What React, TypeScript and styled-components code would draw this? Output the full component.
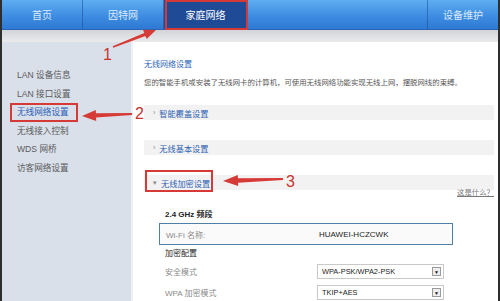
import React from "react";
import styled, { createGlobalStyle, css } from "styled-components";

const GlobalStyle = createGlobalStyle`
  html, body {
    margin: 0;
    padding: 0;
    background: #ffffff;
  }
  body {
    font-family: "Liberation Sans", "Noto Sans CJK SC", sans-serif;
  }
`;

const Page = styled.div`
  position: relative;
  box-sizing: border-box;
  width: 500px;
  height: 301px;
  overflow: hidden;
  display: flex;
  flex-direction: column;
  border-left: 2px solid #2e2e2e;
  border-right: 2px solid #2e2e2e;
  background: #ffffff;
`;

const NavBar = styled.div`
  display: flex;
  height: 30px;
  flex-shrink: 0;
  background: linear-gradient(#5eadf1, #3e8de2 55%, #2d79d3);
  border-bottom: 1px solid #2766b6;
  box-sizing: border-box;
`;

const NavTab = styled.div<{ $width?: number; $active?: boolean; $grow?: boolean }>`
  box-sizing: border-box;
  display: flex;
  align-items: center;
  justify-content: center;
  width: ${(p) => (p.$width ? `${p.$width}px` : "auto")};
  flex: ${(p) => (p.$grow ? "1" : "none")};
  border-right: 1px solid rgba(28, 78, 150, 0.55);
  font-size: 10px;
  color: #dceaf9;
  ${(p) =>
    p.$active &&
    css`
      background: #1f4b96;
      color: #ffffff;
    `}
`;

const SubStrip = styled.div`
  height: 12px;
  flex-shrink: 0;
  background: linear-gradient(#d2d4d8, #e9eaec);
`;

const Body = styled.div`
  flex: 1;
  display: flex;
  min-height: 0;
`;

const Sidebar = styled.div`
  box-sizing: border-box;
  width: 131px;
  flex-shrink: 0;
  padding-top: 24px;
  background: #d9e0ea;
  border-right: 2px solid #eef1f5;
`;

const SideItem = styled.div<{ $active?: boolean }>`
  height: 18.6px;
  line-height: 18.6px;
  padding-left: 15px;
  font-size: 8.6px;
  color: ${(p) => (p.$active ? "#2c60b6" : "#5a5a5a")};
  white-space: nowrap;
`;

const Content = styled.div`
  flex: 1;
  box-sizing: border-box;
  padding: 17px 4px 0 11px;
  background: #ffffff;
`;

const Heading = styled.div`
  height: 12px;
  line-height: 12px;
  font-size: 8px;
  color: #2d64b8;
`;

const Description = styled.div`
  margin-top: 6px;
  height: 12px;
  line-height: 12px;
  font-size: 7.4px;
  color: #555555;
  white-space: nowrap;
`;

const SectionBar = styled.div<{ $first?: boolean }>`
  display: flex;
  align-items: center;
  gap: 4px;
  height: 15px;
  margin-top: ${(p) => (p.$first ? "16px" : "20px")};
  padding-left: 9px;
  background: #f2f2f2;
  font-size: 8.2px;
  color: #2f62b2;
`;

const Chevron = styled.span`
  font-size: 7px;
  color: #888888;
`;

const HelpRow = styled.div`
  margin-top: -2px;
  height: 10px;
  line-height: 10px;
  text-align: right;
  font-size: 7.4px;
  color: #777777;
  text-decoration: underline;
`;

const GroupTitle = styled.div<{ $bold?: boolean; $gap: number }>`
  margin-top: ${(p) => p.$gap}px;
  padding-left: 21px;
  height: 12px;
  line-height: 12px;
  font-size: 8px;
  font-weight: ${(p) => (p.$bold ? "bold" : "normal")};
  color: #262626;
`;

const InputRow = styled.div`
  box-sizing: border-box;
  display: grid;
  grid-template-columns: 153px 1fr;
  align-items: center;
  width: 294px;
  height: 22px;
  margin: 2px 0 0 15px;
  padding-left: 6px;
  border: 1.5px solid #4f7fa6;
  background: #fafafa;
  font-size: 8px;
`;

const FieldLabel = styled.span`
  color: #8a8a8a;
  font-size: 8px;
`;

const FieldValue = styled.span`
  color: #222222;
  font-size: 8px;
`;

const SelectRow = styled.div<{ $gap: number }>`
  display: grid;
  grid-template-columns: 152px 127px;
  align-items: center;
  margin-top: ${(p) => p.$gap}px;
  padding-left: 21px;
`;

const SelectBox = styled.div`
  box-sizing: border-box;
  display: flex;
  align-items: center;
  justify-content: space-between;
  height: 15px;
  padding: 0 2px 0 4px;
  border: 1px solid #c9c9c9;
  background: #ffffff;
  font-size: 7.4px;
  color: #222222;
`;

const DropButton = styled.span`
  box-sizing: border-box;
  display: flex;
  align-items: center;
  justify-content: center;
  width: 9px;
  height: 9px;
  border: 1px solid #9a9a9a;
  background: #eeeeee;
  font-size: 5px;
  color: #111111;
`;

const Annotations = styled.svg`
  position: absolute;
  left: -2px;
  top: 0;
  pointer-events: none;
`;

type Pt = [number, number];

const arrowPoints = (tail: Pt, tip: Pt, headLen: number, headHalf: number, wt: number, wh: number) => {
  const dx = tip[0] - tail[0];
  const dy = tip[1] - tail[1];
  const len = Math.hypot(dx, dy);
  const ux = dx / len;
  const uy = dy / len;
  const nx = -uy;
  const ny = ux;
  const bx = tip[0] - ux * headLen;
  const by = tip[1] - uy * headLen;
  const pts: Pt[] = [
    [tail[0] + nx * wt, tail[1] + ny * wt],
    [bx + nx * wh, by + ny * wh],
    [bx + nx * headHalf, by + ny * headHalf],
    tip,
    [bx - nx * headHalf, by - ny * headHalf],
    [bx - nx * wh, by - ny * wh],
    [tail[0] - nx * wt, tail[1] - ny * wt],
  ];
  return pts.map((p) => `${p[0].toFixed(1)},${p[1].toFixed(1)}`).join(" ");
};

const RED = "#d63a36";

const sideItems = ["LAN 设备信息", "LAN 接口设置", "无线网络设置", "无线接入控制", "WDS 网桥", "访客网络设置"];

export default function App() {
  return (
    <>
      <GlobalStyle />
      <Page>
        <NavBar>
          <NavTab $width={81}>首页</NavTab>
          <NavTab $width={81}>因特网</NavTab>
          <NavTab $width={84} $active>
            家庭网络
          </NavTab>
          <NavTab $grow />
          <NavTab $width={70} style={{ borderRight: "none" }}>
            设备维护
          </NavTab>
        </NavBar>
        <SubStrip />
        <Body>
          <Sidebar>
            {sideItems.map((item, i) => (
              <SideItem key={item} $active={i === 2}>
                {item}
              </SideItem>
            ))}
          </Sidebar>
          <Content>
            <Heading>无线网络设置</Heading>
            <Description>
              您的智能手机或安装了无线网卡的计算机，可使用无线网络功能实现无线上网，摆脱网线的束缚。
            </Description>
            <SectionBar $first>
              <Chevron>›</Chevron>智能覆盖设置
            </SectionBar>
            <SectionBar>
              <Chevron>›</Chevron>无线基本设置
            </SectionBar>
            <SectionBar>
              <Chevron>▾</Chevron>无线加密设置
            </SectionBar>
            <HelpRow>这是什么？</HelpRow>
            <GroupTitle $bold $gap={11}>
              2.4 GHz 频段
            </GroupTitle>
            <InputRow>
              <FieldLabel>Wi-Fi 名称:</FieldLabel>
              <FieldValue>HUAWEI-HCZCWK</FieldValue>
            </InputRow>
            <GroupTitle $gap={3}>加密配置</GroupTitle>
            <SelectRow $gap={4}>
              <FieldLabel>安全模式</FieldLabel>
              <SelectBox>
                WPA-PSK/WPA2-PSK
                <DropButton>▼</DropButton>
              </SelectBox>
            </SelectRow>
            <SelectRow $gap={6}>
              <FieldLabel>WPA 加密模式</FieldLabel>
              <SelectBox>
                TKIP+AES
                <DropButton>▼</DropButton>
              </SelectBox>
            </SelectRow>
          </Content>
        </Body>
        <Annotations width={500} height={301} viewBox="0 0 500 301">
          <rect x={166} y={1} width={81} height={28} fill="none" stroke={RED} strokeWidth={2} />
          <rect x={11} y={104} width={66} height={17} fill="none" stroke={RED} strokeWidth={2} />
          <rect x={146} y={171} width={66} height={20} fill="none" stroke={RED} strokeWidth={2} />
          <polygon points={arrowPoints([113, 47], [156, 30], 12, 5, 0.8, 1.6)} fill={RED} />
          <polygon points={arrowPoints([132, 114], [82, 116], 14, 5.5, 0.9, 2.2)} fill={RED} />
          <polygon points={arrowPoints([283, 179], [223, 181], 15, 5.5, 0.9, 2.2)} fill={RED} />
          <g fill="#c8352f" fontFamily="Liberation Sans, sans-serif" fontSize={16}>
            <text x={103} y={60}>1</text>
            <text x={135} y={119}>2</text>
            <text x={286} y={187}>3</text>
          </g>
        </Annotations>
      </Page>
    </>
  );
}
